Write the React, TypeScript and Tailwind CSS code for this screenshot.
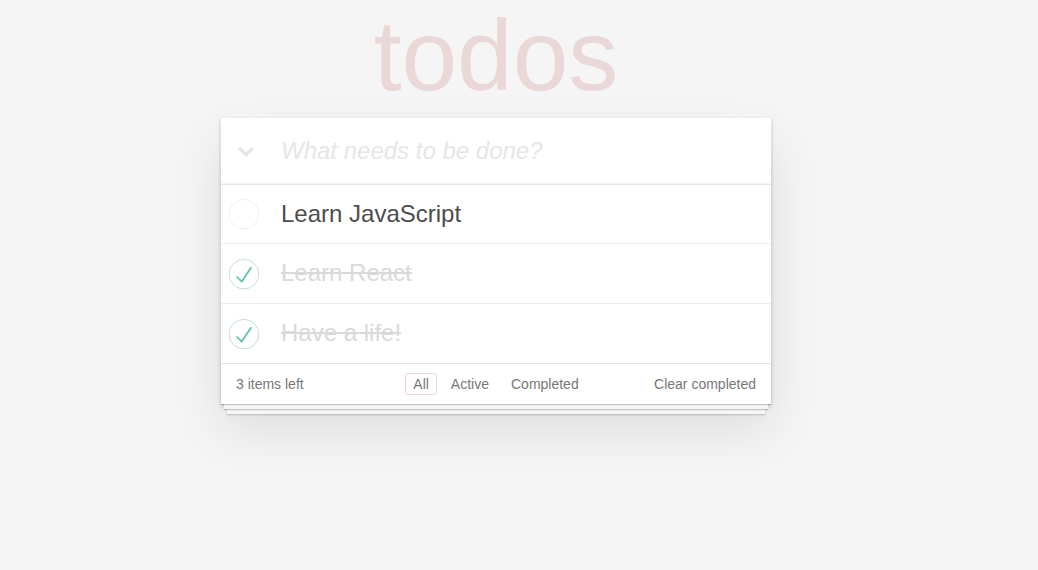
type Todo = {
  id: number;
  title: string;
  completed: boolean;
};

const todos: Todo[] = [
  { id: 1, title: "Learn JavaScript", completed: false },
  { id: 2, title: "Learn React", completed: true },
  { id: 3, title: "Have a life!", completed: true },
];

const filters = ["All", "Active", "Completed"];

function Check({ done }: { done: boolean }) {
  return (
    <svg width="40" height="40" viewBox="-10 -18 100 135" className="shrink-0">
      <circle
        cx="50"
        cy="50"
        r="50"
        fill="none"
        stroke={done ? "#bddad5" : "#ededed"}
        strokeWidth="3"
      />
      {done && <path fill="#5dc2af" d="M72 25L42 71 27 56l-4 4 20 20 34-52z" />}
    </svg>
  );
}

export default function App() {
  return (
    <div className="min-h-screen bg-[#f5f5f5] font-['Liberation_Sans',Arial,sans-serif] text-[14px] text-[#4d4d4d]">
      <div className="ml-[221px] w-[550px] pb-10">
        <h1 className="pt-[5px] mb-[13px] text-center text-[100px] leading-[100px] font-normal text-[rgba(175,47,47,0.15)]">
          todos
        </h1>

        <section className="bg-white shadow-[0_2px_4px_0_rgba(0,0,0,0.2),0_25px_50px_0_rgba(0,0,0,0.1)]">
          <header className="flex h-[65.6px] items-center shadow-[inset_0_-2px_1px_rgba(0,0,0,0.03)]">
            <div className="w-[60px] pl-[16px] pt-[2px]">
              <svg width="18" height="11" viewBox="0 0 18 11">
                <polyline
                  points="2,2 9,8.5 16,2"
                  fill="none"
                  stroke="#e6e6e6"
                  strokeWidth="3.2"
                />
              </svg>
            </div>
            <input
              className="flex-1 bg-transparent pr-[16px] text-[24px] leading-[1.4] outline-none placeholder:italic placeholder:text-[#e6e6e6]"
              placeholder="What needs to be done?"
            />
          </header>

          <ul className="border-t border-[#e6e6e6]">
            {todos.map((todo) => (
              <li
                key={todo.id}
                className="flex items-center border-b border-[#ededed] last:border-b-0"
              >
                <Check done={todo.completed} />
                <span
                  className={
                    todo.completed
                      ? "ml-[20px] py-[15px] text-[24px] leading-[1.2] text-[#d9d9d9] line-through"
                      : "ml-[20px] py-[15px] text-[24px] leading-[1.2]"
                  }
                >
                  {todo.title}
                </span>
              </li>
            ))}
          </ul>

          <footer className="relative grid h-[41px] grid-cols-[1fr_auto_1fr] items-center border-t border-[#e6e6e6] px-[15px] leading-[20px] text-[#777] shadow-[0_1px_1px_rgba(0,0,0,0.2),0_8px_0_-3px_#f6f6f6,0_9px_1px_-3px_rgba(0,0,0,0.2),0_16px_0_-6px_#f6f6f6,0_17px_2px_-6px_rgba(0,0,0,0.2)]">
            <span>3 items left</span>
            <ul className="flex">
              {filters.map((f) => (
                <li key={f}>
                  <span
                    className={
                      f === "All"
                        ? "mx-[3px] block rounded-[3px] border border-[rgba(175,47,47,0.2)] px-[7px] leading-[20px]"
                        : "mx-[3px] block rounded-[3px] border border-transparent px-[7px] leading-[20px]"
                    }
                  >
                    {f}
                  </span>
                </li>
              ))}
            </ul>
            <span className="justify-self-end">Clear completed</span>
          </footer>
        </section>
      </div>
    </div>
  );
}
